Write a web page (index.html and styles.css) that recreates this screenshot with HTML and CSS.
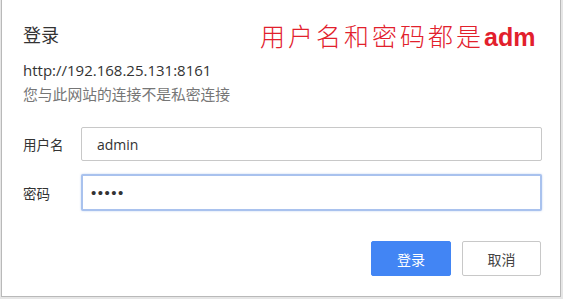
FILE: index.html
```html
<!DOCTYPE html>
<html lang="zh-CN">
<head>
  <meta charset="UTF-8" />
  <meta name="viewport" content="width=device-width, initial-scale=1.0"/>
  <title>登录</title>
  <link rel="stylesheet" href="styles.css">
</head>
<body>

  <div class="dialog">
    <div class="dialog-head">
      <h1 class="dialog-title">登录</h1>
      <div class="note">用户名和密码都是<b>adm</b></div>
    </div>

    <div class="origin">http://192.168.25.131:8161</div>
    <div class="warning">您与此网站的连接不是私密连接</div>

    <form class="login-form" onsubmit="return false;">
      <label class="row">
        <span class="row-label">用户名</span>
        <input class="field" type="text" value="admin">
      </label>
      <label class="row">
        <span class="row-label">密码</span>
        <input class="field focused" type="password" value="admin">
      </label>

      <div class="actions">
        <button class="btn primary" type="submit">登录</button>
        <button class="btn" type="button">取消</button>
      </div>
    </form>
  </div>

</body>
</html>
```

FILE: styles.css
```css
:root {
  --text-color: #333;
  --muted-color: #767676;
  --border-color: #c8c8c8;
  --focus-color: #a9c2ee;
  --primary-color: #4285f4;
  --note-color: #e2202c;
}

* {
  box-sizing: border-box;
}

body {
  margin: 0;
  padding: 0 2px 2px 1px;
  background: #e6e6e6;
  font-family: "Open Sans", "Noto Sans CJK SC", sans-serif;
  color: var(--text-color);
}

.dialog {
  width: 560px;
  height: 297px;
  background: #fff;
  border: 1px solid #b9b9b9;
  border-top: none;
  padding: 0 18px 0 21px;
}

.dialog-head {
  display: flex;
  align-items: flex-end;
  height: 52px;
}

.dialog-title {
  margin: 0 0 5px 0;
  font-size: 18px;
  font-weight: 400;
  width: 237px;
  font-family: "Noto Sans CJK SC", sans-serif;
}

.note {
  width: 274px;
  white-space: nowrap;
  color: var(--note-color);
  font-family: "Noto Sans CJK SC", serif;
  font-weight: 300;
  font-size: 25px;
  letter-spacing: 3px;
  line-height: 30px;
}

.note b {
  font-family: "Liberation Sans", sans-serif;
  font-weight: 700;
  letter-spacing: 0;
  font-size: 25px;
}

.origin {
  margin-top: 9px;
  font-size: 15px;
  line-height: 18px;
}

.warning {
  margin-top: 6px;
  font-size: 14.8px;
  line-height: 18px;
  color: var(--muted-color);
  font-family: "Noto Sans CJK SC", sans-serif;
}

.login-form {
  margin-top: 24px;
}

.row {
  display: flex;
  align-items: center;
  margin-bottom: 13px;
}

.row-label {
  width: 58px;
  flex-shrink: 0;
  font-size: 13.5px;
  font-family: "Noto Sans CJK SC", sans-serif;
}

.field {
  width: 461px;
  height: 34px;
  border: 1px solid var(--border-color);
  border-radius: 2px;
  padding: 0 15px;
  font-family: inherit;
  font-size: 14px;
  color: var(--text-color);
  outline: none;
}

.field.focused {
  height: 37px;
  padding: 0 8px;
  border: 2px solid var(--focus-color);
  box-shadow: 0 0 2px rgba(120, 160, 230, 0.5);
  font-family: "Liberation Sans", sans-serif;
  font-size: 15px;
  letter-spacing: 1.5px;
}

.actions {
  display: flex;
  justify-content: flex-end;
  gap: 11px;
  margin: 30px 1px 0 0;
}

.btn {
  width: 79px;
  height: 35px;
  border: 1px solid var(--border-color);
  border-radius: 2px;
  background: #fff;
  color: #444;
  font-family: "Noto Sans CJK SC", sans-serif;
  font-size: 14px;
  cursor: pointer;
}

.btn.primary {
  width: 80px;
  border-color: var(--primary-color);
  background: var(--primary-color);
  color: #fff;
}
```
